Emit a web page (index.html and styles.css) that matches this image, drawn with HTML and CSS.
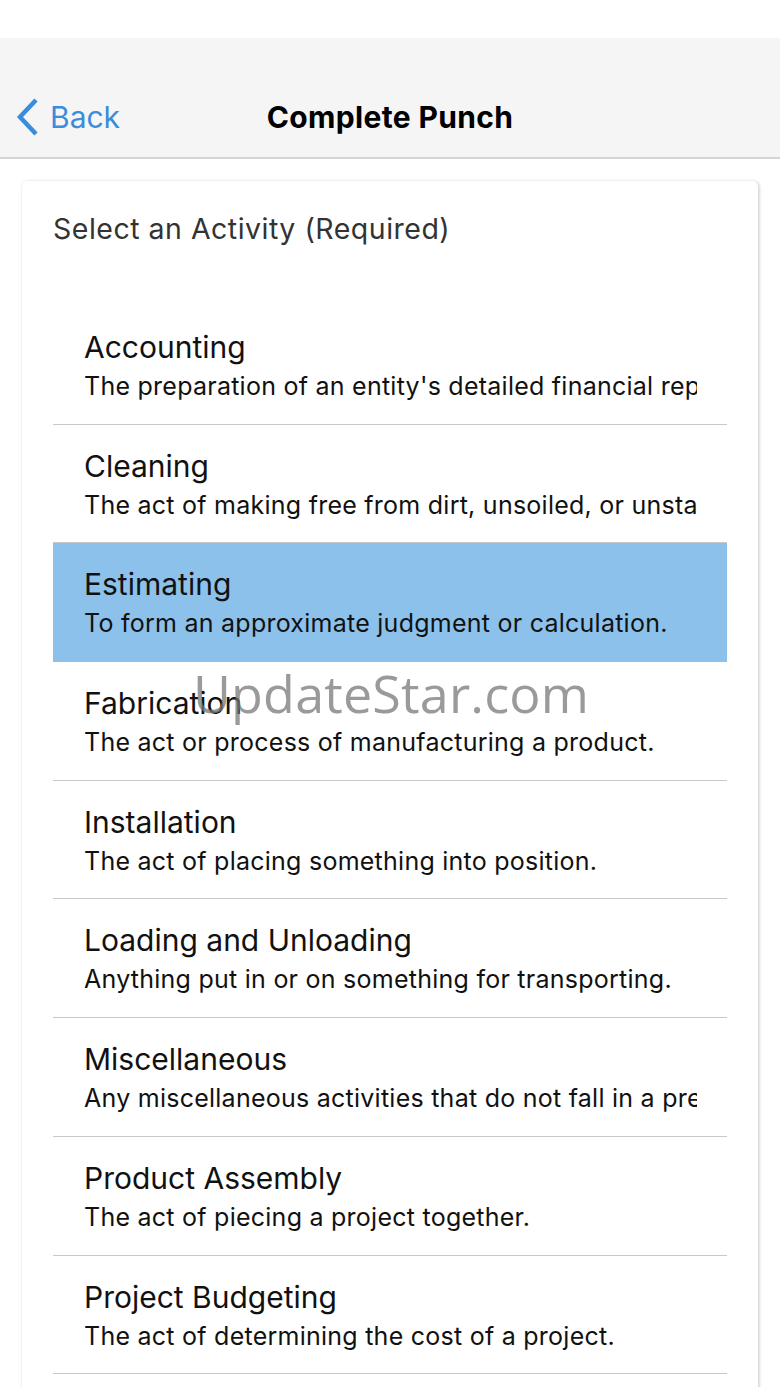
FILE: index.html
```html
<!DOCTYPE html>
<html>
<head>
<meta charset="utf-8">
<link rel="stylesheet" href="styles.css">
</head>
<body>
<div class="status"></div>
<header class="nav">
  <a class="back">
    <svg class="chev" width="26" height="40" viewBox="0 0 26 40"><path d="M22 3 L6 20 L22 37" fill="none" stroke="#3a8cdc" stroke-width="4.5" stroke-linecap="butt" stroke-linejoin="miter"/></svg>
    <span>Back</span>
  </a>
  <h1 class="title">Complete Punch</h1>
</header>
<main class="content">
  <section class="card">
    <h2 class="label">Select an Activity (Required)</h2>
    <ul class="list">
      <li class="row"><div class="name">Accounting</div><div class="desc">The preparation of an entity's detailed financial reports and statements.</div></li>
      <li class="row"><div class="name">Cleaning</div><div class="desc">The act of making free from dirt, unsoiled, or unstained.</div></li>
      <li class="row selected"><div class="name">Estimating</div><div class="desc">To form an approximate judgment or calculation.</div></li>
      <li class="row"><div class="name">Fabrication</div><div class="desc">The act or process of manufacturing a product.</div></li>
      <li class="row"><div class="name">Installation</div><div class="desc">The act of placing something into position.</div></li>
      <li class="row"><div class="name">Loading and Unloading</div><div class="desc">Anything put in or on something for transporting.</div></li>
      <li class="row"><div class="name">Miscellaneous</div><div class="desc">Any miscellaneous activities that do not fall in a predefined category.</div></li>
      <li class="row"><div class="name">Product Assembly</div><div class="desc">The act of piecing a project together.</div></li>
      <li class="row"><div class="name">Project Budgeting</div><div class="desc">The act of determining the cost of a project.</div></li>
    </ul>
  </section>
  <div class="watermark">UpdateStar.com</div>
</main>
</body>
</html>
```
FILE: styles.css
```css
html, body {
  margin: 0;
  padding: 0;
  background: #ffffff;
  font-family: "Inter", "Liberation Sans", sans-serif;
  height: 1387px;
  overflow: hidden;
}
.status {
  height: 38px;
  background: #ffffff;
}
.nav {
  position: relative;
  height: 121px;
  background: #f5f5f5;
  border-bottom: 2px solid #d4d4d4;
  box-sizing: border-box;
  display: flex;
  align-items: center;
  justify-content: center;
}
.back {
  position: absolute;
  left: 14px;
  top: 59px;
  display: flex;
  align-items: center;
  gap: 10px;
  color: #3a8cdc;
  font-size: 30px;
}
.chev { display: block; }
.title {
  margin: 0;
  font-size: 30px;
  font-weight: 700;
  color: #000;
  padding-top: 38px;
  letter-spacing: 0.35px;
}
.content {
  position: relative;
  padding: 22px 22px 0 22px;
}
.card {
  background: #fff;
  border-radius: 5px;
  box-shadow: 0 0 3px rgba(0,0,0,0.12), 2px 1px 3px rgba(0,0,0,0.12);
  padding: 28px 31px 40px 31px;
}
.label {
  margin: 0;
  font-size: 28.5px;
  font-weight: 400;
  color: #333;
  line-height: 40px;
  letter-spacing: 0.5px;
}
.list {
  list-style: none;
  margin: 57px 0 0 0;
  padding: 0;
}
.row {
  height: 118.7px;
  box-sizing: border-box;
  border-bottom: 1.5px solid #c8c8c8;
  padding: 21px 30px 0 31px;
  overflow: hidden;
}
.row.selected {
  background: #8cc1ec;
  border-bottom-color: #8cc1ec;
}
.name {
  font-size: 30px;
  line-height: 40px;
  color: #111;
  white-space: nowrap;
}
.desc {
  font-size: 25px;
  line-height: 38px;
  color: #111;
  white-space: nowrap;
  overflow: hidden;
  letter-spacing: 0.25px;
}
.watermark {
  position: absolute;
  left: 193px;
  top: 498px;
  font-size: 52px;
  color: rgba(120,120,120,0.75);
  font-family: "Open Sans", "Liberation Sans", sans-serif;
  letter-spacing: 0.2px;
  pointer-events: none;
}
```
